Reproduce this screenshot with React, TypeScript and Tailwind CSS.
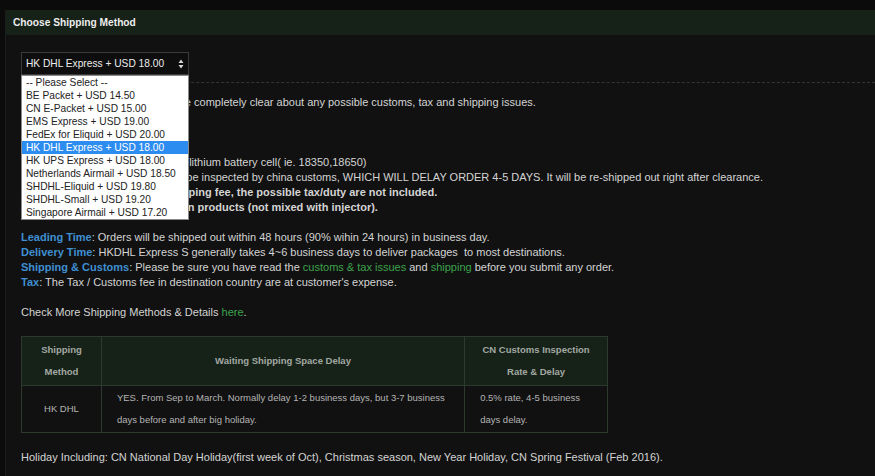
import React from "react";

const options = [
  "-- Please Select --",
  "BE Packet + USD 14.50",
  "CN E-Packet + USD 15.00",
  "EMS Express + USD 19.00",
  "FedEx for Eliquid + USD 20.00",
  "HK DHL Express + USD 18.00",
  "HK UPS Express + USD 18.00",
  "Netherlands Airmail + USD 18.50",
  "SHDHL-Eliquid + USD 19.80",
  "SHDHL-Small + USD 19.20",
  "Singapore Airmail + USD 17.20",
];

const selected = "HK DHL Express + USD 18.00";

function ShippingSelect() {
  return (
    <div className="relative w-[168px]">
      <div className="h-[23px] flex items-center justify-between pl-[4px] pr-[4px] bg-[#0e0e0e] border border-[#3a3a3a] text-[10.2px] text-[#ececec]">
        <span>{selected}</span>
        <svg width="6" height="10" viewBox="0 0 6 10">
          <path d="M3 0.5L5.5 4H0.5Z M3 9.5L0.5 6H5.5Z" fill="#d8d8d8" />
        </svg>
      </div>
      {/* open option list */}
      <ul className="absolute left-0 top-full z-10 w-full bg-white border border-[#8a8a8a] text-[10.2px] text-[#222]">
        {options.map((o) => (
          <li
            key={o}
            className={`h-[13px] leading-[13px] px-[4px] whitespace-nowrap ${o === selected ? "bg-[#2d8cf0] text-white" : ""}`}
          >
            {o}
          </li>
        ))}
      </ul>
    </div>
  );
}

function Label({ children }: { children: React.ReactNode }) {
  return <span className="font-bold text-[#3f8fd2]">{children}</span>;
}

function GreenLink({ children }: { children: React.ReactNode }) {
  return <a className="text-[#3da34c]">{children}</a>;
}

export default function App() {
  return (
    <div className="min-h-screen bg-[#0b0b0b] pt-[10px] pl-[5px] font-['Liberation_Sans',Arial,sans-serif]">
      <div className="bg-[#111111] border-l border-[#1d1d1d] overflow-hidden min-h-[466px]">
        <div className="h-[25px] flex items-center pl-[7px] bg-[#162118] text-[10.2px] font-bold text-[#ededed]">
          Choose Shipping Method
        </div>
        <div className="pl-[15px] pt-[17px] pb-[20px]">
          <ShippingSelect />
          <div className="mt-[7px] border-t border-dashed border-[#353535]" />

          <div className="mt-[12px] text-[11px] leading-[15px] text-[#d4d4d4] whitespace-nowrap">
            <p>Notice:&nbsp; Before ordering, please be completely clear about any possible customs, tax and shipping issues.</p>
            <p>&nbsp;</p>
            <p className="font-bold">HK DHL Express</p>
            <p>Important Notes:</p>
            <p>1. DHL Express does NOT accept lithium battery cell( ie. 18350,18650)</p>
            <p>2. Packages shipped via DHL will be inspected by china customs, WHICH WILL DELAY ORDER 4-5 DAYS. It will be re-shipped out right after clearance.</p>
            <p className="font-bold">3. The price just covers the shipping fee, the possible tax/duty are not included.</p>
            <p className="font-bold">4. Only for liquid and atomization products (not mixed with injector).</p>

            <p className="mt-[15px]">
              <Label>Leading Time</Label>: Orders will be shipped out within 48 hours (90% wihin 24 hours) in business day.
            </p>
            <p>
              <Label>Delivery Time</Label>: HKDHL Express S generally takes 4~6 business days to deliver packages&nbsp; to most destinations.
            </p>
            <p>
              <Label>Shipping &amp; Customs</Label>: Please be sure you have read the <GreenLink>customs &amp; tax issues</GreenLink> and{" "}
              <GreenLink>shipping</GreenLink> before you submit any order.
            </p>
            <p>
              <Label>Tax</Label>: The Tax / Customs fee in destination country are at customer's expense.
            </p>
            <p className="mt-[15px]">
              Check More Shipping Methods &amp; Details <GreenLink>here</GreenLink>.
            </p>
          </div>

          <table className="mt-[16px] w-[587px] border-collapse text-[9.5px] leading-[22px]">
            <thead>
              <tr className="bg-[#162218] text-[#a3a8a3] font-bold">
                <th className="w-[80px] border border-[#2b3a2d] py-[2px] font-bold">
                  Shipping
                  <br />
                  Method
                </th>
                <th className="w-[364px] border border-[#2b3a2d] py-[2px] font-bold">Waiting Shipping Space Delay</th>
                <th className="w-[143px] border border-[#2b3a2d] py-[2px] font-bold">
                  CN Customs Inspection
                  <br />
                  Rate &amp; Delay
                </th>
              </tr>
            </thead>
            <tbody className="text-[#b4b4b4]">
              <tr>
                <td className="border border-[#2b3a2d] text-center py-[1px]">HK DHL</td>
                <td className="border border-[#2b3a2d] px-[15px] py-[1px]">
                  YES. From Sep to March. Normally delay 1-2 business days, but 3-7 business days before and after big holiday.
                </td>
                <td className="border border-[#2b3a2d] px-[15px] py-[1px]">0.5% rate, 4-5 business days delay.</td>
              </tr>
            </tbody>
          </table>

          <p className="mt-[17px] text-[11px] leading-[15px] text-[#d4d4d4] whitespace-nowrap">
            Holiday Including: CN National Day Holiday(first week of Oct), Christmas season, New Year Holiday, CN Spring Festival (Feb 2016).
          </p>
        </div>
      </div>
    </div>
  );
}
